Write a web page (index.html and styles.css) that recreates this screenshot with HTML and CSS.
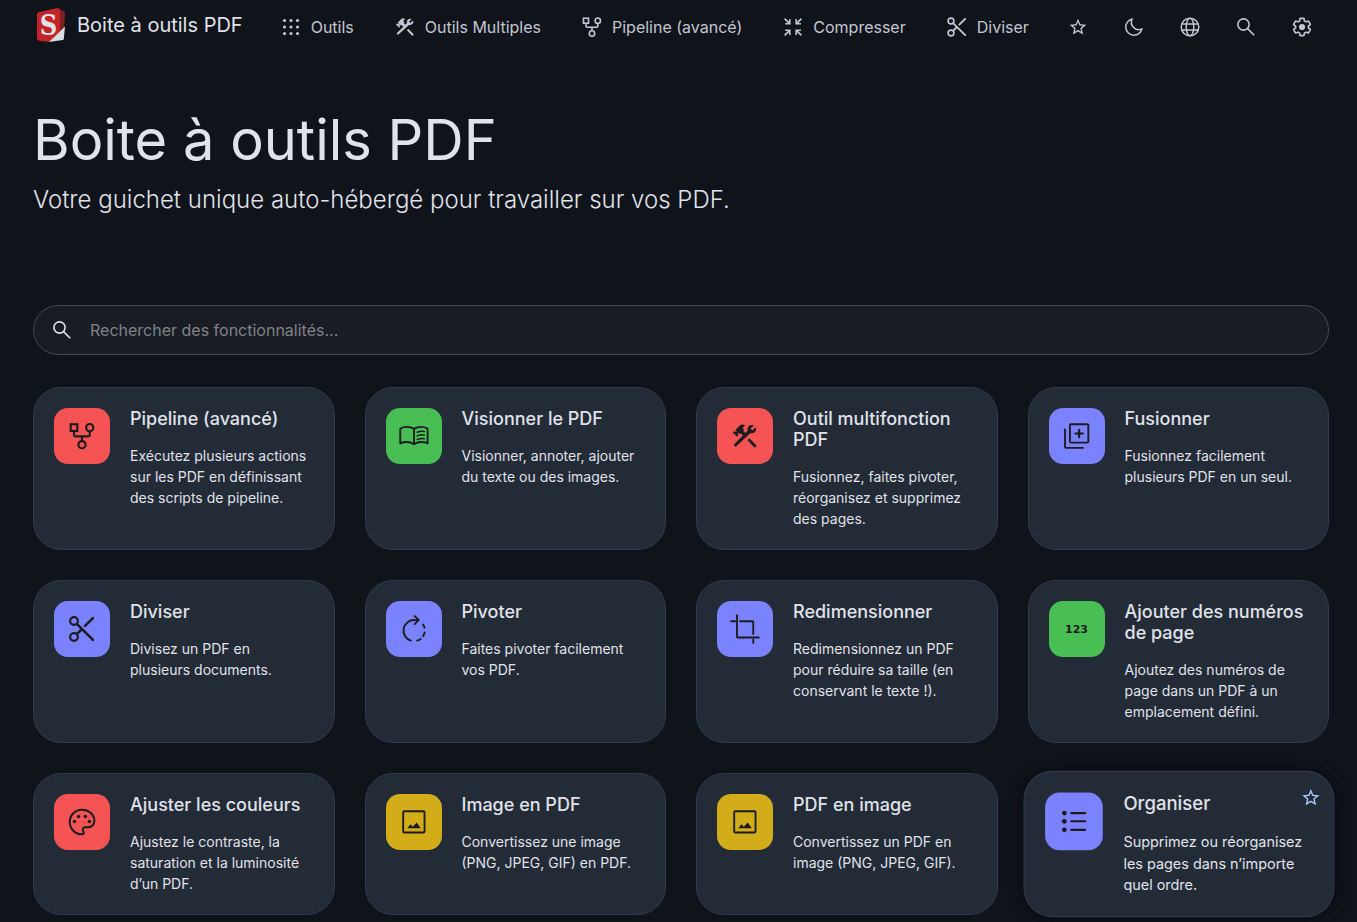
FILE: index.html
```html
<!DOCTYPE html>
<html lang="fr">
<head>
<meta charset="utf-8">
<title>Boite à outils PDF</title>
<meta name="viewport" content="width=device-width, initial-scale=1">
<link rel="stylesheet" href="styles.css">
</head>
<body>
<svg class="sprite" aria-hidden="true">
  <symbol id="i-apps" viewBox="0 0 24 24"><g fill="currentColor"><circle cx="5.5" cy="5.5" r="1.6"/><circle cx="12" cy="5.5" r="1.6"/><circle cx="18.5" cy="5.5" r="1.6"/><circle cx="5.5" cy="12" r="1.6"/><circle cx="12" cy="12" r="1.6"/><circle cx="18.5" cy="12" r="1.6"/><circle cx="5.500" cy="18.5" r="1.6"/><circle cx="12" cy="18.5" r="1.6"/><circle cx="18.5" cy="18.5" r="1.6"/></g></symbol>
  <symbol id="i-tools" viewBox="-1 -1 26 26"><path fill="currentColor" d="M14 15.400l1.500-1.500 5.600 5.600q.5.5 0 1l-.6.6q-.5.5-1 0zM17.500 9.700c1.930 0 3.500-1.400 3.500-3.200 0-.58-.16-1.120-.41-1.600l-2.700 2.700-1.490-1.490 2.700-2.700c-.48-.25-1.020-.41-1.600-.41C15.570 3 14 4.570 14 6.500c0 .41.08.8.21 1.160l-1.850 1.850-1.780-1.780.71-.71-1.410-1.410L12 3.490c-1.170-1.170-3.070-1.170-4.240 0L4.220 7.030l1.410 1.410H2.810l-.71.71 3.540 3.540.71-.71V9.150l1.410 1.410.71-.71 1.780 1.780-7 7q-.5.5 0 1l.6.6q.5.5 1 0L16.340 9.790c.36.03.75-.09 1.160-.09z"/></symbol>
  <symbol id="i-pipeline" viewBox="0 0 24 24"><g fill="none" stroke="currentColor" stroke-width="1.6"><rect x="3.5" y="3.2" width="5" height="5"/><circle cx="17.8" cy="5.7" r="2.7"/><circle cx="12" cy="18.5" r="2.7"/><path d="M6 8.2v3.1q0 1 1 1h9.800q1 0 1-1V8.4M12 12.3v3.5"/></g></symbol>
  <symbol id="i-compress" viewBox="0 0 24 24"><path fill="none" stroke="currentColor" stroke-width="1.6" d="M3.600 3.600l4.500 4.500M20.400 3.600l-4.500 4.500M3.600 20.400l4.500-4.500M20.400 20.400l-4.500-4.500"/><path fill="currentColor" d="M9.600 4v5.600H4V8.200l3-.4.800-.8.400-3zM14.400 4v5.600H20V8.200l-3-.4-.8-.8-.4-3zM9.600 20v-5.600H4v1.400l3 .4.800.8.400 3zM14.400 20v-5.600H20v1.400l-3 .4-.8.8-.4 3z"/></symbol>
  <symbol id="i-cut" viewBox="0 0 24 24"><g fill="none" stroke="currentColor"><circle cx="6" cy="6" r="2.9" stroke-width="1.6"/><circle cx="6" cy="18" r="2.9" stroke-width="1.6"/><path stroke-width="1.9" stroke-linecap="round" d="M8.3 8.3L20.2 20.2M8.3 15.7l3.2-3.2M14.3 9.7l5.9-5.9"/></g></symbol>
  <symbol id="i-star" viewBox="0 0 24 24"><path fill="currentColor" d="M22 9.24l-7.19-.62L12 2 9.19 8.63 2 9.24l5.46 4.73L5.82 21 12 17.27 18.18 21l-1.63-7.03L22 9.24zM12 15.4l-3.76 2.27 1-4.28-3.32-2.88 4.38-.38L12 6.1l1.71 4.04 4.38.38-3.32 2.88 1 4.28L12 15.4z"/></symbol>
  <symbol id="i-moon" viewBox="0 0 24 24"><path fill="none" stroke="currentColor" stroke-width="1.5" stroke-linejoin="round" d="M10.2 4A8.2 8.2 0 1 0 20 13.8 7.3 7.3 0 0 1 10.2 4z"/></symbol>
  <symbol id="i-globe" viewBox="0 0 24 24"><g fill="none" stroke="currentColor" stroke-width="1.5"><circle cx="12" cy="12" r="8.8"/><ellipse cx="12" cy="12" rx="3.8" ry="8.8"/><path d="M3.8 9h16.4M3.8 15h16.4"/></g></symbol>
  <symbol id="i-search" viewBox="0 0 24 24"><g fill="none" stroke="currentColor" stroke-width="1.6"><circle cx="9.5" cy="9.5" r="5.6"/><path d="M13.6 13.6l6.6 6.6"/></g></symbol>
  <symbol id="i-gear" viewBox="-2 -2 28 28"><path fill="none" stroke="currentColor" stroke-width="1.9" d="M19.43 12.98c.04-.32.07-.64.07-.98s-.03-.66-.07-.98l2.11-1.65c.19-.15.24-.42.12-.64l-2-3.46c-.12-.22-.39-.3-.61-.22l-2.49 1c-.52-.4-1.08-.73-1.69-.98l-.38-2.65C14.46 2.18 14.25 2 14 2h-4c-.25 0-.46.18-.49.42l-.38 2.65c-.61.25-1.17.59-1.69.98l-2.49-1c-.23-.09-.49 0-.61.22l-2 3.46c-.13.22-.07.49.12.64l2.11 1.65c-.04.32-.07.65-.07.98s.03.66.07.98l-2.11 1.65c-.19.15-.24.42-.12.64l2 3.46c.12.22.39.3.61.22l2.49-1c.52.4 1.08.73 1.69.98l.38 2.65c.03.24.24.42.49.42h4c.25 0 .46-.18.49-.42l.38-2.65c.61-.25 1.17-.59 1.69-.98l2.49 1c.23.09.49 0 .61-.22l2-3.46c.12-.22.07-.49-.12-.64z"/><circle cx="12" cy="12" r="3.6" fill="currentColor"/></symbol>
  <symbol id="i-book" viewBox="0 0 24 24"><g fill="none" stroke="currentColor" stroke-linejoin="round"><path stroke-width="1.4" d="M12 6.6Q9.6 5.2 6.6 5.2T2 6.3q-.3.2-.3.6v10.6q2.2-1 4.9-1t5.4 1.6q2.6-1.6 5.3-1.6t4.9 1V6.9q0-.4-.3-.6-1.8-1.1-4.7-1.1T12 6.6v11.2"/><path stroke-width="1.1" stroke-linecap="round" d="M14.3 9.2q2.6-1.1 5.4-.6M14.3 11.9q2.6-1.1 5.4-.6M14.3 14.6q2.6-1.1 5.4-.6"/></g></symbol>
  <symbol id="i-merge" viewBox="0 0 24 24"><g fill="none" stroke="currentColor" stroke-linecap="round"><rect x="6.700" y="3.2" width="13.800" height="13.800" rx=".8" stroke-width="1.4"/><path stroke-width="1.4" d="M3 7v13q0 .9.9.9H16.500"/><path stroke-width="1.6" d="M13.600 7.300v5.600M10.800 10.100h5.600"/></g></symbol>
  <symbol id="i-rotate" viewBox="0 0 24 24"><g fill="none" stroke="currentColor" stroke-width="1.4" stroke-linecap="round"><path d="M15 5.3h-2.4A7.9 7.9 0 0 0 9.6 20.7M12.5 2.3l3 3-3 3M18.8 8.6q.8 1.1 1.1 2.4M20 14.6q-.3 1.5-1.2 2.7M17 19.4q-1.1.9-2.7 1.3"/></g></symbol>
  <symbol id="i-crop" viewBox="0 0 24 24"><path fill="none" stroke="currentColor" stroke-width="1.4" stroke-linecap="round" d="M6 1.6V18q0 .4.4.4h16M1.600 6.2h3M8.3 6.2h9.3q.6 0 .6.6v9M18.2 20v2.4"/></symbol>
  <symbol id="i-palette" viewBox="0 0 24 24"><path fill="none" stroke="currentColor" stroke-width="1.5" d="M12 21.2a9.2 9.2 0 0 1 0-18.4c5.2 0 9.3 3.6 9.3 8.2 0 2.900-2.2 5-5 5h-2a1.7 1.7 0 0 0-1.4 2.8c.7.9.5 2.4-.9 2.4z"/><g fill="currentColor"><circle cx="6.400" cy="11.7" r="1.3"/><circle cx="9.4" cy="7.9" r="1.3"/><circle cx="14.5" cy="7.9" r="1.3"/><circle cx="17.6" cy="11.7" r="1.3"/></g></symbol>
  <symbol id="i-image" viewBox="0 0 24 24"><rect x="3.9" y="3.9" width="16" height="16" rx=".8" fill="none" stroke="currentColor" stroke-width="1.4"/><path fill="currentColor" d="M7 16.600l2.400-2.900 1.700 1.900 2.900-3.200 3.100 4.200z"/></symbol>
  <symbol id="i-list" viewBox="0 0 24 24"><g fill="currentColor"><circle cx="5" cy="6" r="1.7"/><circle cx="5" cy="12" r="1.7"/><circle cx="5" cy="18.2" r="1.7"/></g><path fill="none" stroke="currentColor" stroke-width="1.5" stroke-linecap="round" d="M10 6h10.2M10 12h10.2M10 18.2h10.2"/></symbol>
</svg>

<nav class="navbar">
  <a class="brand" href="#">
    <svg class="logo" viewBox="0 0 36 36" aria-hidden="true">
      <path fill="#7d2127" d="M25 2l6 2q1 .4 1 1.500l-1 16-6 12z"/>
      <path fill="#c42327" d="M4 7.500Q4 5.700 5.700 5.300L24.500 1q1.500-.3 1.900 1l.6 3v21L17 35 6 33.800q-2-.3-2-2z"/>
      <path fill="#d5dde0" d="M32 19.500L30.800 32q-.1.900-1 1.100L16 35z"/>
      <text class="logo-letter" x="15.500" y="28" text-anchor="middle">S</text>
    </svg>
    <span>Boite à outils PDF</span>
  </a>
  <div class="nav-links">
    <a class="nav-link" href="#"><svg class="icon"><use href="#i-apps"/></svg><span>Outils</span></a>
    <a class="nav-link" href="#"><svg class="icon"><use href="#i-tools"/></svg><span>Outils Multiples</span></a>
    <a class="nav-link" href="#"><svg class="icon"><use href="#i-pipeline"/></svg><span>Pipeline (avancé)</span></a>
    <a class="nav-link" href="#"><svg class="icon"><use href="#i-compress"/></svg><span>Compresser</span></a>
    <a class="nav-link" href="#"><svg class="icon"><use href="#i-cut"/></svg><span>Diviser</span></a>
  </div>
  <div class="nav-actions">
    <button class="icon-button" type="button" aria-label="Favoris"><svg class="icon-small"><use href="#i-star"/></svg></button>
    <button class="icon-button" type="button" aria-label="Mode sombre"><svg class="icon"><use href="#i-moon"/></svg></button>
    <button class="icon-button" type="button" aria-label="Langue"><svg class="icon"><use href="#i-globe"/></svg></button>
    <button class="icon-button" type="button" aria-label="Rechercher"><svg class="icon"><use href="#i-search"/></svg></button>
    <button class="icon-button" type="button" aria-label="Paramètres"><svg class="icon"><use href="#i-gear"/></svg></button>
  </div>
</nav>

<main class="page">
  <header class="hero">
    <h1 class="hero-title">Boite à outils PDF</h1>
    <p class="hero-lead">Votre guichet unique auto-hébergé pour travailler sur vos PDF.</p>
  </header>

  <label class="search">
    <svg class="icon" aria-hidden="true"><use href="#i-search"/></svg>
    <input class="search-input" type="text" placeholder="Rechercher des fonctionnalités..." aria-label="Rechercher des fonctionnalités">
  </label>

  <section class="cards">
    <a class="card" href="#"><span class="tile red"><svg class="tile-icon"><use href="#i-pipeline"/></svg></span><div class="card-body"><h2 class="card-title">Pipeline (avancé)</h2><p class="card-text">Exécutez plusieurs actions sur les PDF en définissant des scripts de pipeline.</p></div></a>
    <a class="card" href="#"><span class="tile green"><svg class="tile-icon"><use href="#i-book"/></svg></span><div class="card-body"><h2 class="card-title">Visionner le PDF</h2><p class="card-text">Visionner, annoter, ajouter du texte ou des images.</p></div></a>
    <a class="card" href="#"><span class="tile red"><svg class="tile-icon"><use href="#i-tools"/></svg></span><div class="card-body"><h2 class="card-title">Outil multifonction PDF</h2><p class="card-text">Fusionnez, faites pivoter, réorganisez et supprimez des pages.</p></div></a>
    <a class="card" href="#"><span class="tile violet"><svg class="tile-icon"><use href="#i-merge"/></svg></span><div class="card-body"><h2 class="card-title">Fusionner</h2><p class="card-text">Fusionnez facilement plusieurs PDF en un seul.</p></div></a>
    <a class="card" href="#"><span class="tile violet"><svg class="tile-icon"><use href="#i-cut"/></svg></span><div class="card-body"><h2 class="card-title">Diviser</h2><p class="card-text">Divisez un PDF en plusieurs documents.</p></div></a>
    <a class="card" href="#"><span class="tile violet"><svg class="tile-icon"><use href="#i-rotate"/></svg></span><div class="card-body"><h2 class="card-title">Pivoter</h2><p class="card-text">Faites pivoter facilement vos PDF.</p></div></a>
    <a class="card" href="#"><span class="tile violet"><svg class="tile-icon"><use href="#i-crop"/></svg></span><div class="card-body"><h2 class="card-title">Redimensionner</h2><p class="card-text">Redimensionnez un PDF pour réduire sa taille (en conservant le texte !).</p></div></a>
    <a class="card" href="#"><span class="tile green tile-digits" aria-hidden="true">123</span><div class="card-body"><h2 class="card-title">Ajouter des numéros de page</h2><p class="card-text">Ajoutez des numéros de page dans un PDF à un emplacement défini.</p></div></a>
    <a class="card" href="#"><span class="tile red"><svg class="tile-icon"><use href="#i-palette"/></svg></span><div class="card-body"><h2 class="card-title">Ajuster les couleurs</h2><p class="card-text">Ajustez le contraste, la saturation et la luminosité d’un PDF.</p></div></a>
    <a class="card" href="#"><span class="tile yellow"><svg class="tile-icon"><use href="#i-image"/></svg></span><div class="card-body"><h2 class="card-title">Image en PDF</h2><p class="card-text">Convertissez une image (PNG, JPEG, GIF) en PDF.</p></div></a>
    <a class="card" href="#"><span class="tile yellow"><svg class="tile-icon"><use href="#i-image"/></svg></span><div class="card-body"><h2 class="card-title">PDF en image</h2><p class="card-text">Convertissez un PDF en image (PNG, JPEG, GIF).</p></div></a>
    <a class="card card-active" href="#"><span class="tile violet"><svg class="tile-icon"><use href="#i-list"/></svg></span><div class="card-body"><h2 class="card-title">Organiser</h2><p class="card-text">Supprimez ou réorganisez les pages dans n’importe quel ordre.</p></div><svg class="card-star icon-small"><use href="#i-star"/></svg></a>
  </section>
</main>
</body>
</html>
```
FILE: styles.css
```css
* { box-sizing: border-box; }

body {
  margin: 0;
  min-height: 100vh;
  background: #0f131a;
  color: #e0e2ec;
  font-family: Inter, "Liberation Sans", sans-serif;
  font-size: 16px;
  line-height: 24px;
  overflow-x: hidden;
  scrollbar-width: none;
}

a { color: inherit; text-decoration: none; }
h1, h2, p { margin: 0; font-weight: 400; }

.sprite { display: none; }
.icon { width: 24px; height: 24px; flex: none; }
.icon-small { width: 20px; height: 20px; flex: none; }

.navbar {
  display: flex;
  align-items: center;
  height: 54px;
  padding: 0 43px 0 33px;
}
.brand {
  display: flex;
  align-items: center;
  gap: 8px;
  padding-bottom: 5px;
  font-size: 20px;
  white-space: nowrap;
}
.logo { width: 36px; height: 36px; }
.logo-letter {
  font: bold 27px "Liberation Sans Narrow", "DejaVu Serif Condensed", serif;
  fill: #dfe3e8;
}
.nav-links {
  display: flex;
  gap: 39px;
  margin-left: 36px;
  color: #c3c6d2;
  white-space: nowrap;
}
.nav-link { display: flex; align-items: center; gap: 8px; }
.nav-actions {
  display: flex;
  gap: 32px;
  margin-left: auto;
  color: #c3c6d2;
}
.icon-button {
  display: flex;
  align-items: center;
  justify-content: center;
  width: 24px;
  height: 24px;
  padding: 0;
  border: 0;
  background: none;
  color: inherit;
}

.page { padding: 52px 28px 6px 33px; }
.hero-title { font-size: 56px; line-height: 68px; }
.hero-lead {
  margin-top: 8px;
  font-size: 24px;
  line-height: 36px;
  font-weight: 300;
}

.search {
  display: flex;
  align-items: center;
  gap: 16px;
  height: 50px;
  margin: 87px 0 32px;
  padding: 0 16px;
  border: 1px solid #434852;
  border-radius: 25px;
  background: #191c23;
}
.search-input {
  flex: 1;
  padding: 0;
  border: 0;
  outline: 0;
  background: none;
  color: inherit;
  font: inherit;
}
.search-input::placeholder { color: #7f828a; opacity: 1; }

.cards {
  display: grid;
  grid-template-columns: repeat(4, minmax(0, 1fr));
  gap: 30px;
}
.card {
  position: relative;
  display: flex;
  align-items: flex-start;
  gap: 20px;
  padding: 20px;
  border: 1px solid #303b4d;
  border-radius: 28px;
  background: #222b36;
}
.card-body { flex: 1; min-width: 0; }
.card-title { font-size: 18px; line-height: 21px; font-weight: 450; }
.card-text { margin-top: 16px; font-size: 14px; line-height: 21px; }

.tile {
  display: flex;
  align-items: center;
  justify-content: center;
  flex: none;
  width: 56px;
  height: 56px;
  border-radius: 14px;
  color: #1c1b1f;
}
.tile-icon { width: 32px; height: 32px; }
.tile-digits { font: bold 11px "DejaVu Sans", sans-serif; }
.red { background: #f65454; }
.green { background: #49be54; }
.violet { background: #7a82ff; }
.yellow { background: #d3ac19; }

.card-active {
  transform: scale(1.03);
  box-shadow: 0 0 12px rgba(0, 0, 0, 0.5);
}
.card-star {
  position: absolute;
  top: 15px;
  right: 12px;
  color: #a8c8ff;
}
```
